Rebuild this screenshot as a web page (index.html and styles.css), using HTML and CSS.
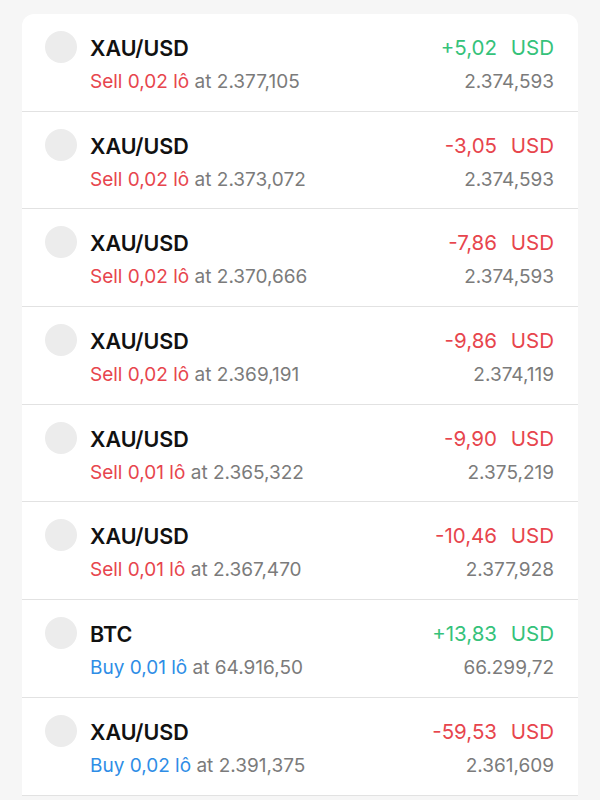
FILE: index.html
```html
<!DOCTYPE html>
<html>
<head>
  <link rel="stylesheet" href="styles.css">
</head>
<body>
  <div class="positions">
    <div class="position">
      <div class="icon"></div>
      <div class="info">
        <div class="symbol">XAU/USD</div>
        <div class="order"><span class="sell">Sell 0,02 lô</span> at 2.377,105</div>
      </div>
      <div class="result">
        <div class="profit up">+5,02 <span class="ccy">USD</span></div>
        <div class="price">2.374,593</div>
      </div>
    </div>

    <div class="position">
      <div class="icon"></div>
      <div class="info">
        <div class="symbol">XAU/USD</div>
        <div class="order"><span class="sell">Sell 0,02 lô</span> at 2.373,072</div>
      </div>
      <div class="result">
        <div class="profit down">-3,05 <span class="ccy">USD</span></div>
        <div class="price">2.374,593</div>
      </div>
    </div>

    <div class="position">
      <div class="icon"></div>
      <div class="info">
        <div class="symbol">XAU/USD</div>
        <div class="order"><span class="sell">Sell 0,02 lô</span> at 2.370,666</div>
      </div>
      <div class="result">
        <div class="profit down">-7,86 <span class="ccy">USD</span></div>
        <div class="price">2.374,593</div>
      </div>
    </div>

    <div class="position">
      <div class="icon"></div>
      <div class="info">
        <div class="symbol">XAU/USD</div>
        <div class="order"><span class="sell">Sell 0,02 lô</span> at 2.369,191</div>
      </div>
      <div class="result">
        <div class="profit down">-9,86 <span class="ccy">USD</span></div>
        <div class="price">2.374,119</div>
      </div>
    </div>

    <div class="position">
      <div class="icon"></div>
      <div class="info">
        <div class="symbol">XAU/USD</div>
        <div class="order"><span class="sell">Sell 0,01 lô</span> at 2.365,322</div>
      </div>
      <div class="result">
        <div class="profit down">-9,90 <span class="ccy">USD</span></div>
        <div class="price">2.375,219</div>
      </div>
    </div>

    <div class="position">
      <div class="icon"></div>
      <div class="info">
        <div class="symbol">XAU/USD</div>
        <div class="order"><span class="sell">Sell 0,01 lô</span> at 2.367,470</div>
      </div>
      <div class="result">
        <div class="profit down">-10,46 <span class="ccy">USD</span></div>
        <div class="price">2.377,928</div>
      </div>
    </div>

    <div class="position">
      <div class="icon"></div>
      <div class="info">
        <div class="symbol">BTC</div>
        <div class="order"><span class="buy">Buy 0,01 lô</span> at 64.916,50</div>
      </div>
      <div class="result">
        <div class="profit up">+13,83 <span class="ccy">USD</span></div>
        <div class="price">66.299,72</div>
      </div>
    </div>

    <div class="position">
      <div class="icon"></div>
      <div class="info">
        <div class="symbol">XAU/USD</div>
        <div class="order"><span class="buy">Buy 0,02 lô</span> at 2.391,375</div>
      </div>
      <div class="result">
        <div class="profit down">-59,53 <span class="ccy">USD</span></div>
        <div class="price">2.361,609</div>
      </div>
    </div>
  </div>
</body>
</html>
```

FILE: styles.css
```css
body {
  background-color: #f6f6f6;
  font-family: Inter, "Noto Sans", sans-serif;
  margin: 0;
  padding: 14px 22px 0;
  height: 800px;
  box-sizing: border-box;
  overflow: hidden;
}

.positions {
  background-color: white;
  border-radius: 12px 12px 0 0;
}

.position {
  display: flex;
  align-items: flex-start;
  height: 96.7px;
  box-sizing: content-box;
  padding: 0 24px 0 23px;
  border-bottom: 1px solid #e2e2e2;
}

.icon {
  width: 32px;
  height: 32px;
  border-radius: 50%;
  background-color: #ececec;
  margin-top: 17px;
  flex-shrink: 0;
}

.info {
  flex: 1;
  margin-left: 13px;
  margin-top: 22px;
}

.symbol {
  font-size: 21.5px;
  line-height: 24px;
  font-weight: 600;
  color: #111;
}

.order {
  font-size: 19px;
  line-height: 22px;
  margin-top: 11px;
  color: #7b7b7b;
}

.sell {
  color: #e7454d;
}

.buy {
  color: #2e8de6;
}

.result {
  text-align: right;
  margin-top: 22px;
}

.profit {
  font-size: 20.5px;
  line-height: 24px;
}

.profit .ccy {
  margin-left: 8px;
}

.up {
  color: #35c27a;
}

.down {
  color: #e7454d;
}

.price {
  font-size: 19px;
  line-height: 22px;
  margin-top: 11px;
  color: #7b7b7b;
}
```
